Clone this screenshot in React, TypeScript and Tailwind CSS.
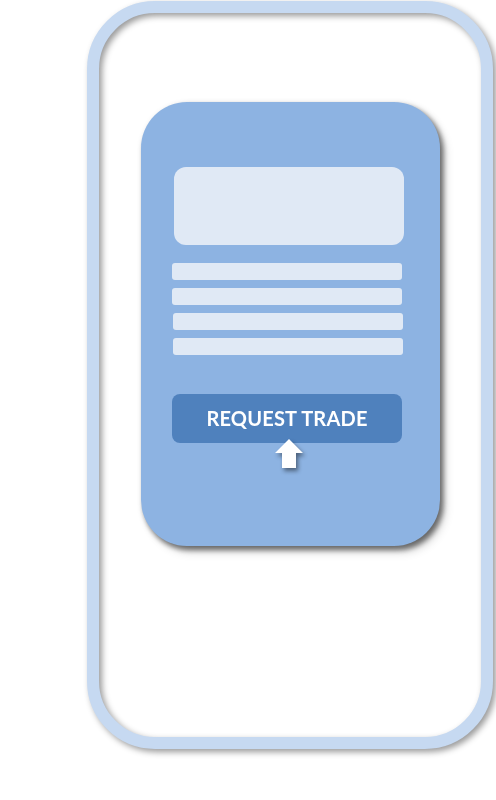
export default function App() {
  return (
    <div className="w-[496px] h-[800px] bg-white overflow-hidden" style={{ fontFamily: 'Lato, "Open Sans", sans-serif' }}>
      <div className="ml-[87px] mt-[1px] w-[406px] h-[748px] rounded-[68px] border-[12px] border-[#c6d9f1] drop-shadow-[3px_3px_3px_rgba(0,0,0,0.4)]">
        <div className="ml-[42px] mt-[89px] w-[299px] h-[444px] rounded-[46px] bg-[#8db3e2] shadow-[3px_4px_5px_rgba(0,0,0,0.35)] px-[31px] pt-[65px]">
          <div className="ml-[2px] w-[230px] h-[78px] rounded-[12px] bg-[#e0e9f5]" />
          <div className="mt-[18px] flex flex-col gap-[8px]">
            <div className="w-[230px] h-[17px] rounded-[3px] bg-[#e0e9f5]" />
            <div className="w-[230px] h-[17px] rounded-[3px] bg-[#e0e9f5]" />
            <div className="ml-[1px] w-[230px] h-[17px] rounded-[3px] bg-[#e0e9f5]" />
            <div className="ml-[1px] w-[230px] h-[17px] rounded-[3px] bg-[#e0e9f5]" />
          </div>
          <div className="relative mt-[39px] w-[230px] h-[49px] rounded-[8px] bg-[#4f81bd] flex items-center justify-center">
            <span className="text-white font-bold text-[20px] tracking-[0.2px] leading-none -mt-[1px]">REQUEST TRADE</span>
            <svg
              className="absolute left-[103px] top-[45px] drop-shadow-[2px_3px_2px_rgba(0,0,0,0.45)]"
              width="28"
              height="29"
              viewBox="0 0 28 29"
            >
              <polygon points="14,0 28,14 21,14 21,29 7,29 7,14 0,14" fill="#ffffff" />
            </svg>
          </div>
        </div>
      </div>
    </div>
  )
}
